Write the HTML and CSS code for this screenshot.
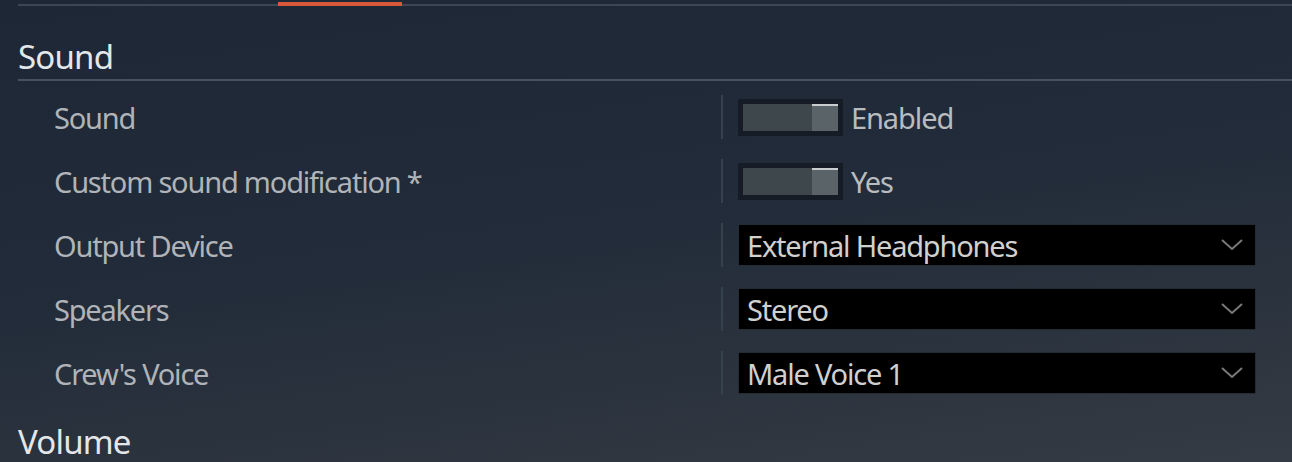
FILE: index.html
```html
<!DOCTYPE html>
<html>
<head>
<meta charset="utf-8">
<link rel="stylesheet" href="styles.css">
</head>
<body>
<div class="page">
  <div class="tabbar"><div class="tab-active"></div></div>
  <div class="section-title">Sound</div>
  <div class="rows">
    <div class="row">
      <div class="label">Sound</div>
      <div class="sep"></div>
      <div class="control">
        <div class="toggle"><div class="track"><div class="thumb"></div></div></div>
        <span class="value">Enabled</span>
      </div>
    </div>
    <div class="row">
      <div class="label">Custom sound modification *</div>
      <div class="sep"></div>
      <div class="control">
        <div class="toggle"><div class="track"><div class="thumb"></div></div></div>
        <span class="value">Yes</span>
      </div>
    </div>
    <div class="row">
      <div class="label">Output Device</div>
      <div class="sep"></div>
      <div class="control">
        <div class="select"><span>External Headphones</span>
          <svg class="chev" width="22" height="12" viewBox="0 0 22 12"><path d="M1 1 L11 10 L21 1" fill="none" stroke="#7a7a7a" stroke-width="2"/></svg>
        </div>
      </div>
    </div>
    <div class="row">
      <div class="label">Speakers</div>
      <div class="sep"></div>
      <div class="control">
        <div class="select"><span>Stereo</span>
          <svg class="chev" width="22" height="12" viewBox="0 0 22 12"><path d="M1 1 L11 10 L21 1" fill="none" stroke="#7a7a7a" stroke-width="2"/></svg>
        </div>
      </div>
    </div>
    <div class="row">
      <div class="label">Crew's Voice</div>
      <div class="sep"></div>
      <div class="control">
        <div class="select"><span>Male Voice 1</span>
          <svg class="chev" width="22" height="12" viewBox="0 0 22 12"><path d="M1 1 L11 10 L21 1" fill="none" stroke="#7a7a7a" stroke-width="2"/></svg>
        </div>
      </div>
    </div>
  </div>
  <div class="section-title plain">Volume</div>
</div>
</body>
</html>
```
FILE: styles.css
```css
html, body {
  margin: 0;
  padding: 0;
  height: 100%;
}
body {
  background: linear-gradient(172deg, #1d2735 0%, #212b39 45%, #2b333e 75%, #353b44 100%);
  font-family: "Noto Sans", "Open Sans", sans-serif;
  overflow: hidden;
}
.page {
  width: 1292px;
  height: 462px;
}
.tabbar {
  margin-left: 18px;
  height: 6px;
  position: relative;
  border-bottom: 2px solid #3c4755;
  box-sizing: border-box;
}
.tab-active {
  position: absolute;
  left: 260px;
  width: 124px;
  bottom: -2px;
  height: 4px;
  background: #d8583a;
}
.section-title {
  margin-left: 18px;
  font-size: 33px;
  color: #e4e7ea;
  line-height: 40px;
  padding-top: 31px;
  padding-bottom: 2px;
  border-bottom: 2px solid #465261;
  letter-spacing: -0.8px;
}
.section-title.plain {
  border-bottom: none;
  padding-top: 17px;
}
.rows {
  padding-top: 4px;
}
.row {
  height: 64px;
  display: flex;
  align-items: center;
}
.label {
  width: 667px;
  padding-left: 54px;
  font-size: 29px;
  color: #b0b4b8;
  letter-spacing: -1.2px;
}
.sep {
  width: 2px;
  height: 44px;
  background: #36414e;
}
.control {
  margin-left: 15px;
  display: flex;
  align-items: center;
  gap: 8px;
}
.toggle {
  width: 105px;
  height: 37px;
  background: #151c25;
  padding: 5px;
  box-sizing: border-box;
}
.track {
  height: 100%;
  background: #3e484c;
  display: flex;
  justify-content: flex-end;
}
.thumb {
  width: 26px;
  height: 100%;
  background: #5a6367;
  border-top: 2px solid #c9cdcd;
  box-sizing: border-box;
}
.value {
  font-size: 29px;
  color: #b8bcbf;
  letter-spacing: -1.1px;
}
.select {
  width: 518px;
  height: 42px;
  background: #000;
  border: 1px solid #262c33;
  box-sizing: border-box;
  display: flex;
  align-items: center;
  justify-content: space-between;
  padding: 0 12px 0 8px;
  font-size: 29px;
  color: #d0d0d0;
  letter-spacing: -1.2px;
}
.chev {
  display: block;
}
```
